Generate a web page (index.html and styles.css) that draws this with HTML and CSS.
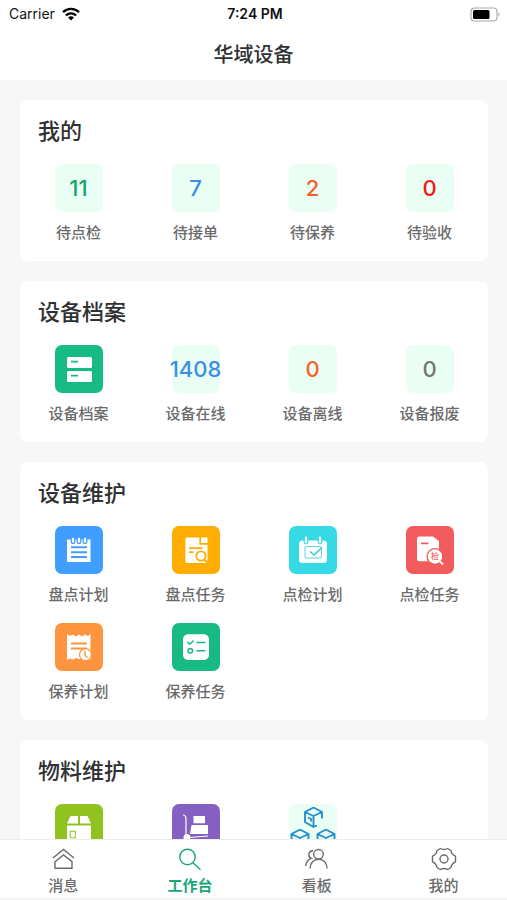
FILE: index.html
```html
<!DOCTYPE html>
<html lang="zh-CN">
<head>
<meta charset="utf-8">
<meta name="viewport" content="width=device-width, initial-scale=1">
<title>华域设备</title>
<link rel="stylesheet" href="styles.css">
</head>
<body>
<div class="app">
  <div class="status">
    <div class="carrier">
      <span>Carrier</span>
      <svg width="18" height="14" viewBox="0 0 18 14" fill="none" stroke="#000" stroke-width="2.4"><path d="M1 5.2a11.4 11.4 0 0 1 16 0M3.9 8.5a7.2 7.2 0 0 1 10.2 0"/><path d="M9 13.6 6 10.6a4.3 4.3 0 0 1 6 0z" fill="#000" stroke="none"/></svg>
    </div>
    <span class="clock">7:24 PM</span>
    <div class="battery">
      <svg width="31" height="15" viewBox="0 0 31 15"><rect x="1" y="1" width="26" height="13" rx="3.5" fill="#fff" stroke="#aaa" stroke-width="1.2"/><rect x="3" y="3" width="16.500" height="9" rx="1.500"/><path d="M28.500 5.500q2.500 2 0 4z" fill="#aaa"/></svg>
    </div>
  </div>
  <header class="header"><h1>华域设备</h1></header>

  <main class="content">
    <section class="card">
      <h2>我的</h2>
      <div class="grid">
        <a class="item" href="#"><span class="tile green">11</span><span>待点检</span></a>
        <a class="item" href="#"><span class="tile blue">7</span><span>待接单</span></a>
        <a class="item" href="#"><span class="tile orange">2</span><span>待保养</span></a>
        <a class="item" href="#"><span class="tile red">0</span><span>待验收</span></a>
      </div>
    </section>

    <section class="card">
      <h2>设备档案</h2>
      <div class="grid">
        <a class="item" href="#">
          <svg class="tile bg-green" viewBox="0 0 48 48"><rect x="12" y="12" width="25" height="11" rx="1.500" fill="#fff"/><rect x="12" y="26" width="25" height="11" rx="1.500" fill="#fff"/><path d="M16 16.700h7M16 30.700h7" stroke="#18ba83" stroke-width="1.800"/></svg>
          <span>设备档案</span></a>
        <a class="item" href="#"><span class="tile blue">1408</span><span>设备在线</span></a>
        <a class="item" href="#"><span class="tile orange">0</span><span>设备离线</span></a>
        <a class="item" href="#"><span class="tile gray">0</span><span>设备报废</span></a>
      </div>
    </section>

    <section class="card">
      <h2>设备维护</h2>
      <div class="grid">
        <a class="item" href="#">
          <svg class="tile bg-blue" viewBox="0 0 48 48"><path d="M12 13.500h23.500V36H12z" fill="#fff"/><g fill="#fff" stroke="#409eff" stroke-width="1.300"><rect x="16.200" y="11" width="3.600" height="6.500" rx="1.800"/><rect x="22.200" y="11" width="3.600" height="6.500" rx="1.800"/><rect x="28.200" y="11" width="3.600" height="6.500" rx="1.800"/></g><path d="M16 21.300h16M16 26.200h16M16 31h16" stroke="#409eff" stroke-width="1.900"/></svg>
          <span>盘点计划</span></a>
        <a class="item" href="#">
          <svg class="tile bg-amber" viewBox="0 0 48 48"><path d="M15 11.500h20.500V37H15a1.600 1.600 0 0 1-1.600-1.600V13.100A1.600 1.600 0 0 1 15 11.500z" fill="#fff"/><g fill="none" stroke="#ffad00"><path d="M28.200 11v6.800H36" stroke-width="1.700"/><path d="M17 22.200h13.500M17 26.200h4.500" stroke-width="1.700"/><circle cx="29" cy="30" r="4.700" fill="#fff" stroke-width="1.800"/><path d="m32.300 33.500 4 4" stroke-width="2"/></g></svg>
          <span>盘点任务</span></a>
        <a class="item" href="#">
          <svg class="tile bg-cyan" viewBox="0 0 48 48"><rect x="10" y="14.500" width="28" height="22.500" rx="3.500" fill="#fff"/><g fill="#fff" stroke="#36d9e6" stroke-width="1.200"><rect x="15.200" y="9.800" width="3.600" height="8" rx="1.800"/><rect x="29.200" y="9.800" width="3.600" height="8" rx="1.800"/></g><g fill="none" stroke="#36c9d6"><rect x="16" y="20.500" width="16.500" height="11.500" rx="1" stroke-width=".8"/><path d="m21 25.500 4 3.500 8-7.500" stroke-width="1.500"/></g></svg>
          <span>点检计划</span></a>
        <a class="item" href="#">
          <svg class="tile bg-red" viewBox="0 0 48 48"><path d="M13.500 10.500H27l6 4.500v20.300H13.500A2.500 2.500 0 0 1 11 32.800V13a2.500 2.500 0 0 1 2.500-2.500z" fill="#fff"/><path d="M15 17.300h7.500" stroke="#f15b5b" stroke-width="1.700"/><circle cx="29" cy="30.500" r="8.500" fill="#f15b5b"/><path d="m34 35.500 3 3" stroke="#fff" stroke-width="1.800"/><circle cx="29" cy="30.500" r="7.200" fill="#fff"/><text x="29" y="33.300" font-size="8" text-anchor="middle" fill="#f15b5b">检</text></svg>
          <span>点检任务</span></a>
        <a class="item" href="#">
          <svg class="tile bg-orange" viewBox="0 0 48 48"><path d="m12 11 3 2 3-1.500 3 2 3-2 3 2 3-2 3 1.500 2.500-2V37L32 36H24l-3-1-3 1.500-3-1L12 37z" fill="#fff"/><path d="M16 20.500h16M16 25.500h16" stroke="#ff943e" stroke-width="1.900"/><circle cx="30.500" cy="31.700" r="6" fill="#fff" stroke="#ff943e" stroke-width="1.200"/><path d="M30 28v4.500l2.500 2" fill="none" stroke="#ff943e" stroke-width="1.500"/></svg>
          <span>保养计划</span></a>
        <a class="item" href="#">
          <svg class="tile bg-green" viewBox="0 0 48 48"><rect x="11" y="11.300" width="26" height="25.700" rx="5" fill="#fff"/><g fill="none" stroke="#18ba83" stroke-width="1.500"><path d="m15.500 19 2.200 2.200 4-3.700M24.500 19.500h9M24.500 27.700h9"/><circle cx="18.300" cy="27.700" r="2.300"/></g></svg>
          <span>保养任务</span></a>
      </div>
    </section>

    <section class="card">
      <h2>物料维护</h2>
      <div class="grid">
        <a class="item" href="#">
          <svg class="tile bg-lime" viewBox="0 0 48 48"><path d="M15.500 12H23v7.500H12zM25 12h7.500l3.500 7.500H25zM12 21.500h24V40H12z" fill="#fff"/><rect x="15.300" y="27.300" width="5" height="6.500" fill="none" stroke="#90c31f" stroke-width="1"/></svg></a>
        <a class="item" href="#">
          <svg class="tile bg-purple" viewBox="0 0 48 48"><path d="M21.500 12H33v7.300H21.500zM19.500 21H36v9H18z" fill="#fff"/><path d="M11 11q3 0 3 4v16M18 33.500l18-1.500" fill="none" stroke="#fff" stroke-width="1.200"/><circle cx="15" cy="33.500" r="3.500" fill="#fff"/></svg></a>
        <a class="item" href="#">
          <svg class="tile" viewBox="0 0 48 48"><defs><path id="cube" d="M0 0 8.500 4.500V11M0 0l-8.500 4.500v10l8.500 5 3.500-1.500M-8.500 4.500 0 8.500l8.500-4M0 8.500v11M-5.500 10l3 1.500v2.500"/></defs><g fill="none" stroke="#258fd0" stroke-width="1.900" stroke-linejoin="round"><use href="#cube" x="24.500" y="3.500"/><use href="#cube" x="11" y="25.500"/><use href="#cube" x="37" y="25.500"/></g></svg></a>
      </div>
    </section>
  </main>

  <nav class="tabs">
    <a href="#"><svg viewBox="0 0 26 26"><path d="m3 12 10.500-8.500L24 12M5 15.700l8.500-6.700 8.500 6.700v6.500H5z"/></svg><span>消息</span></a>
    <a href="#" class="active"><svg viewBox="0 0 26 26"><circle cx="10.500" cy="11" r="7.700"/><path d="m16 16.700 7.500 7"/></svg><span>工作台</span></a>
    <a href="#"><svg viewBox="0 0 26 26"><circle cx="14.500" cy="8.300" r="4.800"/><path d="M6 22.500c.3-6 4-9.300 8.500-9.300s8.200 3.300 8.700 9.300M9 4.800c-5-.3-5.300 6.300-1.800 7.500C4 13.500 2 16 1.700 20"/></svg><span>看板</span></a>
    <a href="#"><svg viewBox="0 0 26 26"><path stroke-linejoin="round" d="M9.500 2.500Q13 4.500 16.500 2.500L20 4.500Q20.500 8.500 24.500 10.200V15.800Q20.500 17.500 20 21.500L16.500 23.500Q13 21.500 9.500 23.500L6 21.500Q5.500 17.500 1.500 15.800V10.200Q5.500 8.500 6 4.500Z"/><circle cx="13" cy="13" r="4"/></svg><span>我的</span></a>
  </nav>
</div>
</body>
</html>
```
FILE: styles.css
```css
* {
  box-sizing: border-box;
}

body {
  margin: 0;
  background: #fff;
  color: #303133;
  font-family: "Noto Sans CJK SC", sans-serif;
}

a {
  color: inherit;
  text-decoration: none;
}

.app {
  display: flex;
  flex-direction: column;
  height: 100vh;
}

.status {
  display: grid;
  grid-template-columns: 1fr auto 1fr;
  align-items: center;
  height: 28px;
  padding: 0 6px 0 9px;
  color: #111;
  font: 14px/20px Inter, sans-serif;
}

.carrier {
  display: flex;
  align-items: center;
  gap: 7px;
}

.clock {
  font-weight: 600;
}

.battery {
  display: flex;
  justify-content: flex-end;
}

.header {
  display: flex;
  align-items: center;
  justify-content: center;
  height: 52px;
}

h1 {
  margin: 0;
  font-size: 20px;
  font-weight: 500;
  line-height: 28px;
}

.content {
  flex: 1;
  display: flex;
  flex-direction: column;
  gap: 20px;
  min-height: 0;
  padding: 20px 19px 20px 20px;
  overflow-y: auto;
  scrollbar-width: none;
  background: #f7f7f7;
}

.card {
  flex: none;
  padding: 13px 0 19px;
  border-radius: 8px;
  background: #fff;
}

h2 {
  margin: 0 18px 19px;
  font-size: 22px;
  font-weight: 500;
  line-height: 32px;
}

.grid {
  display: grid;
  grid-template-columns: repeat(4, 1fr);
  row-gap: 19px;
}

.item {
  display: flex;
  flex-direction: column;
  align-items: center;
  gap: 10px;
  color: #6b6b6b;
  font-size: 15px;
  font-weight: 500;
  line-height: 20px;
}

.tile {
  display: flex;
  align-items: center;
  justify-content: center;
  width: 48px;
  height: 48px;
  border-radius: 7px;
  background: #eafff4;
  font-family: Inter, "Noto Sans CJK SC", sans-serif;
  font-size: 22px;
  font-weight: 500;
}

.green { color: #18a56c; }
.blue { color: #3a8ee6; }
.orange { color: #f4622a; }
.red { color: #f01818; }
.gray { color: #707672; }

.bg-green { background: #18ba83; }
.bg-blue { background: #409eff; }
.bg-amber { background: #ffad00; }
.bg-cyan { background: #36d9e6; }
.bg-red { background: #f15b5b; }
.bg-orange { background: #ff943e; }
.bg-lime { background: #90c31f; }
.bg-purple { background: #855fc2; }

.tabs {
  display: grid;
  grid-template-columns: repeat(4, 1fr);
  height: 61px;
  padding-top: 6px;
  border-top: 1px solid #eee;
  border-bottom: 2px solid #f5f5f5;
  background: #fff;
}

.tabs a {
  display: flex;
  flex-direction: column;
  align-items: center;
  gap: 3px;
  color: #6b6b6b;
  font-size: 15px;
  font-weight: 500;
  line-height: 20px;
}

.tabs svg {
  width: 26px;
  height: 26px;
  fill: none;
  stroke: currentColor;
  stroke-width: 1.4;
}

.tabs .active {
  color: #18a878;
  font-weight: 700;
}
```
